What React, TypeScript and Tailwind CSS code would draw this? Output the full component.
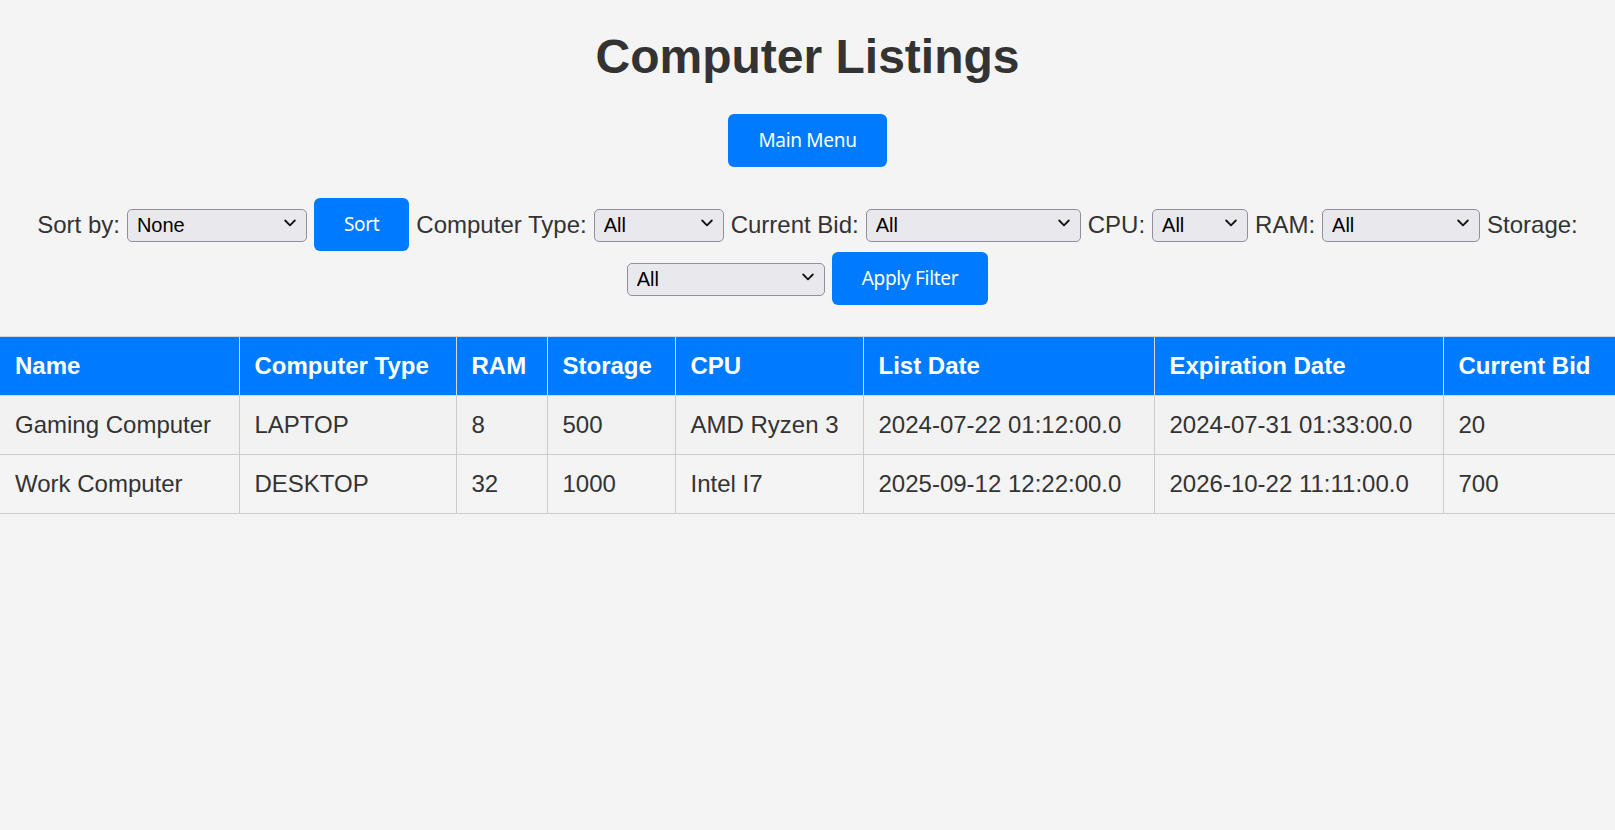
type Listing = {
  name: string;
  type: string;
  ram: number;
  storage: number;
  cpu: string;
  listDate: string;
  expirationDate: string;
  currentBid: number;
};

const listings: Listing[] = [
  {
    name: 'Gaming Computer',
    type: 'LAPTOP',
    ram: 8,
    storage: 500,
    cpu: 'AMD Ryzen 3',
    listDate: '2024-07-22 01:12:00.0',
    expirationDate: '2024-07-31 01:33:00.0',
    currentBid: 20,
  },
  {
    name: 'Work Computer',
    type: 'DESKTOP',
    ram: 32,
    storage: 1000,
    cpu: 'Intel I7',
    listDate: '2025-09-12 12:22:00.0',
    expirationDate: '2026-10-22 11:11:00.0',
    currentBid: 700,
  },
];

const columns = [
  { label: 'Name', width: 'w-[239px]' },
  { label: 'Computer Type', width: 'w-[217px]' },
  { label: 'RAM', width: 'w-[91px]' },
  { label: 'Storage', width: 'w-[128px]' },
  { label: 'CPU', width: 'w-[188px]' },
  { label: 'List Date', width: 'w-[291px]' },
  { label: 'Expiration Date', width: 'w-[289px]' },
  { label: 'Current Bid', width: 'w-[172px]' },
];

function Select({ options, width }: { options: string[]; width: string }) {
  return (
    <div className={`relative ${width} h-[33px] mb-[4px]`}>
      <select className="appearance-none w-full h-full rounded-[5px] border border-[#8f8f9d] bg-[#e9e9ed] pl-[9px] pr-6 text-[20px] text-black font-['Liberation_Sans',Arial,sans-serif] outline-none">
        {options.map((o) => (
          <option key={o}>{o}</option>
        ))}
      </select>
      {/* dropdown chevron */}
      <svg
        className="pointer-events-none absolute right-[11px] top-[13px]"
        width="12"
        height="8"
        viewBox="0 0 12 8"
        fill="none"
      >
        <path d="M1.2 1.5 L6 6.3 L10.8 1.5" stroke="#111" strokeWidth="1.8" strokeLinecap="round" strokeLinejoin="round" />
      </svg>
    </div>
  );
}

function BlueButton({ children }: { children: React.ReactNode }) {
  return (
    <button className="h-[53px] px-[30px] rounded-[6px] bg-[#007bff] text-white text-[19px] font-['Noto_Sans',sans-serif] tracking-[-0.3px] cursor-pointer">
      {children}
    </button>
  );
}

export default function App() {
  return (
    <div className="min-h-screen bg-[#f4f4f4] text-[#333] font-['Liberation_Sans',Arial,sans-serif] pt-[30px]">
      {/* Title */}
      <h1 className="text-center text-[48px] font-bold leading-[54px]">Computer Listings</h1>

      <div className="flex justify-center mt-[30px]">
        <BlueButton>Main Menu</BlueButton>
      </div>

      {/* Sort + filters */}
      <div className="flex flex-wrap justify-center items-center gap-x-[7px] gap-y-px px-[30px] mt-[31px] text-[24px]">
        <span>Sort by:</span>
        <Select options={['None', 'Name', 'Current Bid', 'List Date']} width="w-[180px]" />
        <BlueButton>Sort</BlueButton>
        <span>Computer Type:</span>
        <Select options={['All', 'LAPTOP', 'DESKTOP']} width="w-[130px]" />
        <span>Current Bid:</span>
        <Select options={['All', '0 - 100', '100 - 500', '500+']} width="w-[215px]" />
        <span>CPU:</span>
        <Select options={['All', 'AMD Ryzen 3', 'Intel I7']} width="w-[96px]" />
        <span>RAM:</span>
        <Select options={['All', '8', '16', '32']} width="w-[158px]" />
        <span>Storage:</span>
        <Select options={['All', '500', '1000']} width="w-[198px]" />
        <BlueButton>Apply Filter</BlueButton>
      </div>

      {/* Listings table */}
      <table className="w-full table-fixed border-collapse mt-[31px] text-[24px]">
        <colgroup>
          {columns.map((c) => (
            <col key={c.label} className={c.width} />
          ))}
        </colgroup>
        <thead>
          <tr className="bg-[#007bff] text-white">
            {columns.map((c, i) => (
              <th
                key={c.label}
                className={`text-left font-bold px-[15px] py-[15px] leading-[28px] border-t border-b border-[#d6d6d6] ${i > 0 ? 'border-l' : ''}`}
              >
                {c.label}
              </th>
            ))}
          </tr>
        </thead>
        <tbody>
          {listings.map((l, r) => (
            <tr key={l.name} className={r % 2 === 0 ? 'bg-[#f2f2f2]' : 'bg-[#f4f4f4]'}>
              {[l.name, l.type, l.ram, l.storage, l.cpu, l.listDate, l.expirationDate, l.currentBid].map(
                (v, i) => (
                  <td
                    key={i}
                    className={`px-[15px] py-[15px] leading-[28px] border-b border-[#cccccc] ${i > 0 ? 'border-l' : ''}`}
                  >
                    {v}
                  </td>
                ),
              )}
            </tr>
          ))}
        </tbody>
      </table>
    </div>
  );
}
